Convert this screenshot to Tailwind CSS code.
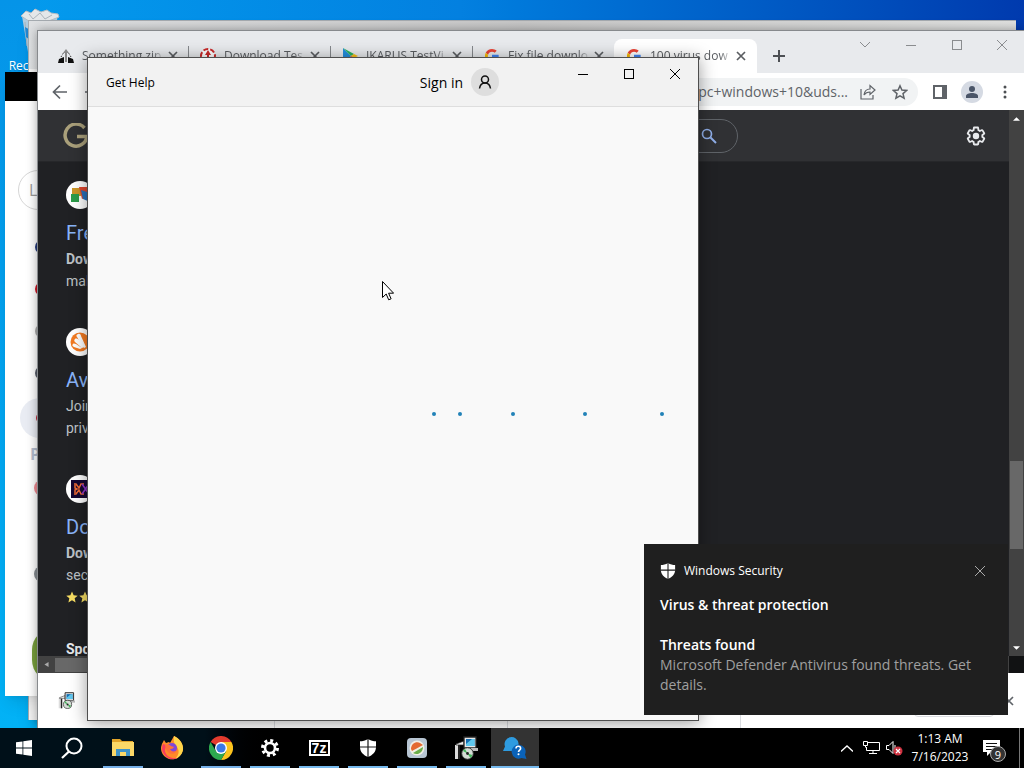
<!DOCTYPE html>
<html lang="en">
<head>
<meta charset="utf-8">
<title>Desktop</title>
<script src="https://cdn.jsdelivr.net/npm/@tailwindcss/browser@4"></script>
</head>
<body class="flex h-screen flex-col overflow-hidden bg-black font-['Open_Sans','Noto_Sans',sans-serif] text-xs">
<svg class="hidden" aria-hidden="true">
  <symbol id="x" viewBox="0 0 12 12"><path d="M1 1l10 10M11 1L1 11" fill="none" stroke="currentColor"/></symbol>
  <symbol id="tabx" viewBox="0 0 10 10"><path d="M1 1l8 8M9 1L1 9" fill="none" stroke="currentColor" stroke-width="1.7"/></symbol>
  <symbol id="g" viewBox="0 0 48 48">
    <path fill="#ea4335" d="M24 9.500c3.540 0 6.710 1.220 9.210 3.600l6.850-6.850C35.900 2.380 30.470 0 24 0 14.620 0 6.510 5.380 2.560 13.220l7.980 6.190C12.430 13.720 17.740 9.500 24 9.500z"/>
    <path fill="#4285f4" d="M46.980 24.550c0-1.570-.15-3.090-.38-4.550H24v9.020h12.940c-.58 2.960-2.260 5.480-4.780 7.180l7.730 6c4.510-4.180 7.090-10.360 7.090-17.650z"/>
    <path fill="#fbbc05" d="M10.530 28.590a14.500 14.500 0 010-9.180l-7.980-6.190a24 24 0 000 21.560z"/>
    <path fill="#34a853" d="M24 48c6.480 0 11.930-2.130 15.890-5.810l-7.730-6c-2.150 1.450-4.920 2.300-8.160 2.300-6.260 0-11.570-4.220-13.470-9.910l-7.980 6.190C6.510 42.620 14.620 48 24 48z"/>
  </symbol>
  <symbol id="shield" viewBox="0 0 18 18"><path fill="currentColor" d="M9 0c2.500 1.600 5.500 2.300 8 2.300V8c0 5-3.500 8.200-8 10-4.500-1.800-8-5-8-10V2.300C3.500 2.300 6.500 1.600 9 0z"/><path d="M9 0v18M1 8h16" stroke="#1c1c1c" stroke-width="1.200"/></symbol>
  <symbol id="gear" viewBox="0 0 24 24"><path fill="currentColor" d="M13.850 22.250h-3.700c-.74 0-1.360-.54-1.450-1.270l-.27-1.890c-.27-.14-.53-.29-.79-.46l-1.800.72c-.7.26-1.470-.03-1.810-.65L2.200 15.530c-.35-.66-.2-1.440.36-1.880l1.530-1.190a6 6 0 010-.91L2.570 10.360c-.59-.45-.74-1.260-.37-1.880l1.850-3.190c.34-.62 1.110-.9 1.790-.63l1.810.73c.26-.17.52-.32.78-.46l.27-1.910c.09-.7.710-1.250 1.440-1.250h3.700c.74 0 1.360.54 1.450 1.270l.27 1.890c.27.14.53.29.79.46l1.800-.72c.71-.26 1.480.03 1.820.65l1.840 3.180c.36.66.2 1.440-.36 1.880l-1.520 1.190a6 6 0 010 .91l1.520 1.190c.56.45.72 1.230.37 1.860l-1.860 3.220c-.34.62-1.110.9-1.800.63l-1.800-.72c-.26.17-.52.32-.78.46l-.27 1.910c-.1.680-.72 1.220-1.460 1.220zm-3.230-2h2.760l.37-2.550.53-.22c.44-.18.88-.44 1.340-.78l.45-.34 2.380.96 1.380-2.400-2.030-1.580.07-.56c.11-.9.110-.78 0-1.570l-.07-.56 2.030-1.580-1.390-2.400-2.390.96-.45-.35c-.42-.32-.87-.58-1.330-.77l-.52-.22-.37-2.550h-2.760l-.37 2.550-.53.21c-.44.19-.88.44-1.340.79l-.45.33-2.380-.95-1.390 2.390 2.030 1.580-.07.56a7 7 0 000 1.580l.07.56-2.030 1.580 1.380 2.400 2.390-.96.45.35c.43.33.86.58 1.330.77l.53.22zM12 8.500a3.500 3.500 0 100 7 3.500 3.500 0 000-7z"/></symbol>
  <symbol id="star" viewBox="0 0 24 24"><path fill="currentColor" d="M12 1l3.300 7.600 8.200.7-6.200 5.400 1.900 8.100L12 18.500l-7.200 4.300 1.900-8.100L.5 9.300l8.200-.7z"/></symbol>
  <symbol id="disc" viewBox="0 0 24 24"><path d="M1 9h5v14H1z" fill="#ddd"/><path d="M5 9v14" stroke="#222" stroke-width="2"/><path d="M2 8l8-3v4H2z" fill="#eee" stroke="#222" stroke-width=".7"/><path d="M10 1h12v11H10z" fill="#e8e8e8" stroke="#222" stroke-width="1.300"/><path d="M12 3h8.500v7H12z" fill="#126db2"/><path d="M12 8l6-5h2.500v7H12z" fill="#5fc8ee"/><path d="M11 12h13v3H11z" fill="#bbb"/><circle cx="13.500" cy="17.500" r="5.800" fill="#d4ddd5" stroke="#333"/><path d="M13.500 17.500L9 15a5 5 0 012-2zM13.500 17.500l4.800 1.500a5 5 0 01-2 3z" fill="#45b45b"/><circle cx="13.500" cy="17.500" r="1.400" fill="#222"/></symbol>
</svg>

<main class="relative min-h-0 flex-1 overflow-hidden bg-linear-to-r from-[#049cee] via-[#0380e0] via-45% to-[#003aae]">
  <div class="absolute inset-y-0 left-0 w-10 bg-linear-to-b from-[#0594e8] to-[#02b2f6]"></div>

  <!-- Recycle Bin shortcut -->
  <a href="#bin" class="absolute top-2 left-0 flex w-20 flex-col items-center gap-0.5 text-white">
    <svg class="h-12 w-10" viewBox="0 0 40 48"><path d="M2 8l36-2-6 38-12 4-12-4z" fill="#c3d2de" opacity=".9"/><path d="M1 8l5-5 5 2 4-4 6 3 6-2 4 3 7 1 1 3-13 5-14 1z" fill="#e4e7e9" stroke="#b4bdc5"/><path d="M9 6l4 5 7-6 5 6 7-4M5 14l2 24M10 15l2 26" fill="none" stroke="#aab4bc"/><path d="M5 19l7 4-2 9-4-3z" fill="#2389d4"/></svg>
    <span class="leading-4 text-shadow-sm">Recycle Bin</span>
  </a>

  <!-- Window behind everything -->
  <section class="absolute top-5 right-2 bottom-2 left-7 border-t border-l border-[#a5abb0] bg-linear-to-r from-[#dfe1e3] via-[#c8c8c8] via-50% to-[#e0e1e0] shadow-lg"><div class="absolute inset-x-0 top-12 bottom-0 bg-[#f4f4f4]"></div></section>

  <!-- Window with the account rail -->
  <section class="absolute top-[72px] bottom-8 left-[5px] w-[600px] overflow-hidden bg-white shadow-lg">
    <div class="h-[29px] bg-black"></div>
    <div class="ml-[13px] flex w-12 flex-col items-center pt-[69px]">
      <div class="flex size-10 items-center self-start rounded-full border border-[#d6d6d6] pl-2.5 text-base leading-5 text-[#9a9a9a]">L</div>
      <div class="mt-[30px] size-3.5 rounded-full bg-[#23397a]"></div>
      <div class="mt-7 size-3.5 rounded-full bg-[#cc1122]"></div>
      <div class="mt-7 size-3.5 rounded-full border-2 border-[#aaa]"></div>
      <div class="mt-7 size-3.5 rounded-full bg-[#555a66]"></div>
      <div class="mt-[18px] ml-0.5 flex size-10 items-center justify-center self-start rounded-full bg-[#e9ecf3]"><span class="ml-1 size-3 rounded-full bg-[#c02035]"></span></div>
      <div class="mt-1 w-6 text-base leading-6 font-bold text-[#b3bccd]">P</div>
      <div class="mt-[14px] size-4 rounded-full bg-[#ef8b92]"></div>
      <div class="mt-[70px] size-4 rounded-full bg-[#858b90]"></div>
    </div>
    <div class="mt-[46px] ml-[27px] h-[54px] w-11 rounded-full bg-[#789f3d]"></div>
  </section>

  <!-- Browser -->
  <section class="absolute top-[30px] right-0 bottom-0 left-[37px] flex flex-col border-t border-l border-[#878a8d] bg-white shadow-[0_0_10px_rgba(0,0,0,0.35)]">
    <header class="flex h-[42px] shrink-0 bg-[#e8eaed] text-[#5a5d61]">
      <nav class="flex pt-2 pl-2">
        <div class="flex w-[142px] items-center pr-2.5 pl-3">
          <svg class="size-4 shrink-0" viewBox="0 0 16 16"><path d="M0 15l1-4 5-2v6zM10 9l5 2 1 4h-6z" fill="#111"/><path d="M8 1l3 4H9v9H7V5H5z" fill="#888"/><path d="M3 9l3-5M13 9l-3-5" stroke="#333" stroke-dasharray="1.500"/></svg>
          <a href="#t1" class="ml-2 min-w-0 flex-1 mask-r-from-85% leading-4 whitespace-nowrap">Something zip</a>
          <button aria-label="Close tab" class="ml-1"><svg class="size-2.5"><use href="#tabx"/></svg></button>
        </div>
        <div class="flex w-[142px] items-center pr-2.5"><i class="h-5 w-px bg-[#85888c]"></i>
          <svg class="ml-[11px] size-4 shrink-0" viewBox="0 0 16 16"><circle cx="8" cy="8" r="7" fill="#fff" stroke="#c92a2a" stroke-width="2" stroke-dasharray="5 2"/><path d="M8 2l3 5H9v6H7V7H5z" fill="#c92a2a"/></svg>
          <a href="#t2" class="ml-2 min-w-0 flex-1 mask-r-from-85% leading-4 whitespace-nowrap">Download Tes</a>
          <button aria-label="Close tab" class="ml-1"><svg class="size-2.5"><use href="#tabx"/></svg></button>
        </div>
        <div class="flex w-[142px] items-center pr-2.5"><i class="h-5 w-px bg-[#85888c]"></i>
          <svg class="ml-[11px] size-4 shrink-0" viewBox="0 0 16 16"><path d="M1 0v16l8-8z" fill="#2490df"/><path d="M1 0l11 6-3 2z" fill="#28b463"/><path d="M12 6l4 2-4 2-3-2z" fill="#fbc116"/><path d="M1 16l11-6-3-2z" fill="#e94335"/></svg>
          <a href="#t3" class="ml-2 min-w-0 flex-1 mask-r-from-85% leading-4 whitespace-nowrap">IKARUS TestVi</a>
          <button aria-label="Close tab" class="ml-1"><svg class="size-2.5"><use href="#tabx"/></svg></button>
        </div>
        <div class="flex w-[142px] items-center pr-2.5"><i class="h-5 w-px bg-[#85888c]"></i>
          <svg class="ml-[11px] size-4 shrink-0 p-px"><use href="#g"/></svg>
          <a href="#t4" class="ml-2 min-w-0 flex-1 mask-r-from-85% leading-4 whitespace-nowrap">Fix file downlo</a>
          <button aria-label="Close tab" class="ml-1"><svg class="size-2.5"><use href="#tabx"/></svg></button>
        </div>
        <div class="flex w-[143px] items-center rounded-t-lg bg-white pr-[11px] pl-3">
          <svg class="size-4 shrink-0 p-px"><use href="#g"/></svg>
          <a href="#t5" class="ml-2 min-w-0 flex-1 mask-r-from-85% leading-4 whitespace-nowrap">100 virus dow</a>
          <button aria-label="Close tab" class="ml-1"><svg class="size-2.5"><use href="#tabx"/></svg></button>
        </div>
        <button aria-label="New tab" class="ml-4"><svg class="size-3" viewBox="0 0 12 12"><path d="M6 0v12M0 6h12" stroke="#4d5054" stroke-width="2"/></svg></button>
      </nav>
      <div class="ml-auto flex h-7 text-[#8a8c8f]">
        <button aria-label="Search tabs" class="flex w-[46px] items-center justify-center"><svg class="h-1.5 w-2.5" viewBox="0 0 10 6"><path d="M0 0l5 5 5-5" fill="none" stroke="currentColor"/></svg></button>
        <button aria-label="Minimize" class="flex w-[46px] items-center justify-center"><i class="h-px w-2.5 bg-[#8a8c8f]"></i></button>
        <button aria-label="Maximize" class="flex w-[46px] items-center justify-center"><i class="size-2.5 border border-[#8a8c8f]"></i></button>
        <button aria-label="Close" class="flex w-11 items-center justify-center"><svg class="size-3"><use href="#x"/></svg></button>
      </div>
    </header>

    <div class="flex h-[37px] shrink-0 items-center bg-white pr-[17px] pl-3.5 text-[#5f6368]">
      <button aria-label="Back"><svg class="size-4" viewBox="0 0 16 16"><path d="M15 8H2M8 1.500L1.500 8 8 14.500" fill="none" stroke="currentColor" stroke-width="1.700"/></svg></button>
      <button aria-label="Forward" class="ml-[17px]"><svg class="size-4" viewBox="0 0 16 16"><path d="M0 8h14M8 1.500L14.500 8 8 14.500" fill="none" stroke="currentColor" stroke-width="1.700"/></svg></button>
      <div class="ml-12 flex h-7 min-w-0 flex-1 items-center rounded-full bg-[#f1f3f4] pr-2.5">
        <input aria-label="Address" class="min-w-0 flex-1 text-right text-sm outline-none" value="google.com/search?q=download+for+pc+windows+10&amp;uds...">
        <button aria-label="Share" class="ml-3"><svg class="size-4" viewBox="0 0 16 16"><path d="M1 5v10h12v-4M4 11c.5-4 2.500-6 6-6V1.500L15 6l-5 4.500V8c-3 0-4.500.8-6 3z" fill="none" stroke="currentColor" stroke-width="1.200"/></svg></button>
        <button aria-label="Bookmark" class="ml-4"><svg class="size-4" viewBox="0 0 16 16"><path d="M8 1.800l1.900 4.300 4.700.4-3.600 3.100 1.100 4.600L8 11.800l-4.100 2.400L5 9.600 1.400 6.500l4.700-.4z" fill="none" stroke="currentColor" stroke-width="1.500"/></svg></button>
      </div>
      <button aria-label="Side panel" class="ml-[15px]"><svg class="size-3.5" viewBox="0 0 14 14"><path d="M0 0h14v14H0zM2 2v10h7V2z" fill="currentColor" fill-rule="evenodd"/></svg></button>
      <button aria-label="Profile" class="ml-3.5 flex size-[22px] items-center justify-center rounded-full bg-[#d5dae3] text-[#4a5568]"><svg class="size-3.5" viewBox="0 0 14 14"><circle cx="7" cy="4" r="3" fill="currentColor"/><path d="M1 13v-2c0-2 3-3 6-3s6 1 6 3v2z" fill="currentColor"/></svg></button>
      <button aria-label="Menu" class="ml-5"><svg class="h-4 w-1" viewBox="0 0 4 16"><g fill="#4c4f53"><circle cx="2" cy="3" r="1.500"/><circle cx="2" cy="8" r="1.500"/><circle cx="2" cy="13" r="1.500"/></g></svg></button>
    </div>

    <div class="flex min-h-0 flex-1 bg-[#111213]">
      <div class="flex min-w-0 flex-1 flex-col bg-[#202124] font-[Roboto,sans-serif] text-[#bdc1c6]">
        <div class="flex h-[52px] shrink-0 items-center border-b border-[#26272a] bg-[#303134] pr-[22px] pl-[25px]">
          <svg class="size-[26px]" viewBox="0 0 26 26"><path d="M21.500 5A11 11 0 1 0 24 13.500H14" fill="none" stroke="#aaa07b" stroke-width="3.500"/></svg>
          <form class="ml-10 flex h-[34px] w-[609px] items-center rounded-full border border-[#5f6368] pr-5">
            <input aria-label="Search" class="min-w-0 flex-1 outline-none">
            <button aria-label="Search"><svg class="size-4" viewBox="0 0 16 16"><circle cx="6" cy="6" r="4.500" fill="none" stroke="#8faee8" stroke-width="1.700"/><path d="M9.500 9.500L15 15" stroke="#8faee8" stroke-width="2"/></svg></button>
          </form>
          <button aria-label="Settings" class="ml-auto text-[#e8eaed]"><svg class="size-[22px]"><use href="#gear"/></svg></button>
        </div>
        <div class="min-h-0 flex-1 overflow-hidden pt-[19px] pl-7 text-sm leading-[22px]">
          <article class="h-[147px]">
            <svg class="size-7 rounded-full bg-white" viewBox="0 0 28 28"><path d="M6 7h9v8H6z" fill="#cc9628"/><path d="M5 13h8v8H5z" fill="#2c9c49"/><path d="M13 6h11v9l-8 3z" fill="#df472f"/><path d="M15 9l9 3v9l-7-3z" fill="#2873bd"/></svg>
            <h3 class="mt-2.5 mb-px text-xl leading-7 text-[#8ab4f8]"><a href="#r1">Free</a></h3>
            <p class="font-bold">Down</p><p>mal</p>
          </article>
          <article class="h-[147px]">
            <svg class="size-7 rounded-full bg-white" viewBox="0 0 28 28"><circle cx="14" cy="14" r="9.500" fill="#f37a21"/><path d="M12 6c2-1 3 1 3 2l5 11-2 1-7-11c-1-1-1-2 1-3zM9 11c1-1 3 0 4 1l5 7-2 1-7-6c-1-1-1-2 0-3zM7 16c1-1 2 0 3 0l6 4-2 1-6-2c-2-1-2-2-1-3z" fill="#fff"/></svg>
            <h3 class="mt-2.5 mb-px text-xl leading-7 text-[#8ab4f8]"><a href="#r2">Ava</a></h3>
            <p>Join</p><p>priv</p>
          </article>
          <article>
            <svg class="size-7 rounded-full bg-white" viewBox="0 0 28 28"><path d="M5 5h20v18H5z" fill="#160833"/><path d="M8 9h2l3 4 2-4h3M8 19h2l3-4 2 4h3M9 10v3l2 1-2 1v3" fill="none" stroke="#f06a35" stroke-width="1.500"/><path d="M16 9l7 10M23 9l-7 10" stroke="#9135c8" stroke-width="1.500"/></svg>
            <h3 class="mt-2.5 mb-px text-xl leading-7 text-[#8ab4f8]"><a href="#r3">Dow</a></h3>
            <p class="font-bold">Down</p><p>sec</p>
            <div class="flex h-[22px] items-center gap-px text-[#f5dc62]"><svg class="size-3"><use href="#star"/></svg><svg class="size-3"><use href="#star"/></svg></div>
          </article>
          <p class="mt-[30px] font-bold text-[#e8eaed]">Spon</p>
        </div>
        <div class="flex h-[17px] shrink-0 items-center bg-[#424242]">
          <svg class="mx-1.5 size-[5px]" viewBox="0 0 5 6"><path d="M5 0v6L0 3z" fill="#aaa"/></svg>
          <i class="h-3.5 w-[700px] bg-[#686868]"></i>
        </div>
      </div>
      <div class="mb-[17px] flex w-[15px] flex-col items-center bg-[#424242] pt-[7px] pb-1.5">
        <svg class="h-1 w-[7px]" viewBox="0 0 8 4"><path d="M0 4h8L4 0z" fill="#fff"/></svg>
        <i class="mt-[340px] h-[88px] w-[13px] bg-[#686868]"></i>
        <svg class="mt-auto h-1 w-[7px]" viewBox="0 0 8 4"><path d="M0 0h8L4 4z" fill="#fff"/></svg>
      </div>
    </div>

    <footer class="flex h-[55px] shrink-0 items-center bg-white pr-2.5 pl-5">
      <svg class="size-[17px] shrink-0"><use href="#disc"/></svg>
      <i class="ml-[199px] h-8 w-px self-end bg-[#dadce0]"></i>
      <i class="ml-[232px] h-8 w-px self-end bg-[#dadce0]"></i>
      <i class="ml-[232px] h-8 w-px self-end bg-[#dadce0]"></i>
      <button aria-label="Show all downloads" class="ml-auto h-8 w-20 rounded border border-[#dadce0]"></button>
      <button aria-label="Close downloads" class="ml-2.5 text-[#5f6368]"><svg class="size-2.5"><use href="#tabx"/></svg></button>
    </footer>
  </section>

  <!-- Get Help -->
  <section class="absolute top-[57px] left-[87px] flex h-[664px] w-[612px] flex-col border border-[#4e4e4e] bg-[#f9f9f9] text-black shadow-[0_2px_16px_rgba(0,0,0,0.4)]">
    <header class="flex h-[49px] shrink-0 items-center border-b border-[#dedede] bg-[#f2f2f2] pl-[18px]">
      <h1 class="pt-0.5 leading-4">Get Help</h1>
      <button class="ml-auto flex items-center gap-2 text-sm"><span class="pt-0.5">Sign in</span>
        <span class="flex size-7 items-center justify-center rounded-full bg-[#dedede]"><svg class="size-3.5" viewBox="0 0 14 14"><circle cx="7" cy="4.500" r="3.500" fill="none" stroke="#111" stroke-width="1.500"/><path d="M1.500 13.500C2 10 4 8 7 8s5 2 5.500 5.500" fill="none" stroke="#111" stroke-width="1.500"/></svg></span>
      </button>
      <div class="ml-[61px] flex h-8 self-start">
        <button aria-label="Minimize" class="flex w-[46px] items-center justify-center"><i class="h-px w-2.5 bg-black"></i></button>
        <button aria-label="Maximize" class="flex w-[46px] items-center justify-center"><i class="size-2.5 border border-black"></i></button>
        <button aria-label="Close" class="flex w-[46px] items-center justify-center"><svg class="size-3"><use href="#x"/></svg></button>
      </div>
    </header>
    <div role="progressbar" aria-label="Loading" class="pt-[305px]">
      <svg class="h-1 w-full" viewBox="0 0 610 4"><g fill="#2282b8"><circle cx="346" cy="2" r="2"/><circle cx="372" cy="2" r="2"/><circle cx="425" cy="2" r="2"/><circle cx="497" cy="2" r="2"/><circle cx="574" cy="2" r="2"/></g></svg>
    </div>
  </section>

  <!-- Pointer -->
  <svg class="absolute top-[281px] left-[382px] h-5 w-3" viewBox="0 0 12 20"><path d="M.5.500v16l3.700-3.500 2.500 5.800 2.400-1-2.500-5.600h5z" fill="#fff" stroke="#000"/></svg>

  <!-- Notification -->
  <aside class="absolute right-4 bottom-[13px] w-[364px] bg-[#1f1f1f] px-4 pt-[18px] pb-5 text-sm leading-5 text-white">
    <div class="flex h-[18px] items-center text-xs">
      <svg class="size-4"><use href="#shield"/></svg><span class="ml-2">Windows Security</span>
      <button aria-label="Dismiss" class="mr-1.5 ml-auto text-[#aaa]"><svg class="size-3"><use href="#x"/></svg></button>
    </div>
    <h2 class="mt-[15px] font-semibold">Virus &amp; threat protection</h2>
    <h3 class="mt-5 font-semibold">Threats found</h3>
    <p class="text-[#a0a0a0]">Microsoft Defender Antivirus found threats. Get details.</p>
  </aside>
</main>

<!-- Taskbar -->
<footer class="flex h-10 shrink-0 items-stretch bg-linear-to-r from-[#001019] from-20% to-black to-27% text-white">
  <button aria-label="Start" class="flex w-12 items-center justify-center"><svg class="size-4" viewBox="0 0 16 16"><path d="M0 2.300l6.500-.9v6.200H0zM7.300 1.300L16 0v7.600H7.300zM0 8.400h6.500v6.200L0 13.700zM7.300 8.400H16V16l-8.700-1.200z" fill="#fff"/></svg></button>
  <button aria-label="Search" class="flex w-12 items-center justify-center"><svg class="size-[22px]" viewBox="0 0 22 22"><circle cx="13" cy="9" r="7.500" fill="none" stroke="#fff" stroke-width="2"/><path d="M8 14.500L1 21" stroke="#fff" stroke-width="2.200"/></svg></button>
  <nav class="ml-[3px] flex gap-px">
    <button aria-label="File Explorer" class="flex w-12 flex-col items-center justify-between pt-2"><svg class="h-6 w-[22px]" viewBox="0 0 22 24"><path d="M0 3h8l2 2h11v4H0z" fill="#e2a429"/><path d="M0 8V6h22v14H0z" fill="#fbd867"/><path d="M4 20v-7h14v7h-4v-4H8v4z" fill="#3f93c7"/></svg><i class="h-0.5 w-10 bg-[#76b0e8]"></i></button>
    <button aria-label="Firefox" class="flex w-12 items-start justify-center pt-2"><svg class="size-6" viewBox="0 0 24 24"><path d="M23 13A11 11 0 1 1 3 6l1-2 2 3 3-1 1 1 4-7c5 2 9 7 9 13z" fill="#ff8a2a"/><path d="M14 0c5 2 10 8 9 14-1 5-5 8-8 9 5-5 4-9 2-12-2-2-4-5-3-11z" fill="#ffd54a"/><path d="M3 8a11 11 0 0015 14c-6 1-12-1-13-7 0-3 1-5 4-5z" fill="#fb3b5e"/><circle cx="12" cy="12" r="5" fill="#8046d8"/><path d="M5 9c3-1 5 0 6 1l3 1c-1 2-3 2-4 2 1 3 5 3 7 1-2 6-11 5-12-5z" fill="#ff7139"/></svg></button>
    <button aria-label="Chrome" class="flex w-12 flex-col items-center justify-between pt-2"><svg class="size-6" viewBox="0 0 24 24"><path d="M12 12L1.600 6A12 12 0 0122.400 6z" fill="#e33b2e"/><path d="M12 12V6h10.400A12 12 0 0112 24l5.200-9z" fill="#fcc31e"/><path d="M1.600 6L6.800 15l10.400 0L12 24A12 12 0 011.600 6z" fill="#2da94f"/><circle cx="12" cy="12" r="6" fill="#fff"/><circle cx="12" cy="12" r="4.600" fill="#3c79e6"/></svg><i class="h-0.5 w-10 bg-[#76b0e8]"></i></button>
    <button aria-label="Settings" class="flex w-12 flex-col items-center justify-between pt-[11px]"><svg class="size-[18px]" viewBox="0 0 18 18"><circle cx="9" cy="9" r="5" fill="none" stroke="#fff" stroke-width="2.600"/><circle cx="9" cy="9" r="7.500" fill="none" stroke="#fff" stroke-width="3" stroke-dasharray="2.950 2.940"/></svg><i class="h-0.5 w-10 bg-[#76b9ed]"></i></button>
    <button aria-label="7-Zip" class="flex w-12 flex-col items-center justify-between pt-3"><span class="flex h-4 w-[21px] items-center justify-center border-2 border-white bg-black font-['Liberation_Sans',sans-serif] text-sm leading-none font-bold">7z</span><i class="h-0.5 w-10 bg-[#76b9ed]"></i></button>
    <button aria-label="Security" class="flex w-12 flex-col items-center justify-between pt-[11px]"><svg class="size-[18px]"><use href="#shield"/></svg><i class="h-0.5 w-10 bg-[#76b9ed]"></i></button>
    <button aria-label="Media app" class="flex w-12 flex-col items-center justify-between pt-2.5"><svg class="size-5" viewBox="0 0 20 20"><rect width="20" height="20" rx="4" fill="#b7c5d3"/><circle cx="10" cy="10" r="7.500" fill="#f1eee5"/><path d="M4 11c0-5 5-8 9-6l3 2-11 6z" fill="#e46a32"/><path d="M6 15l10-6c0 5-5 9-10 6z" fill="#6aac48"/></svg><i class="h-0.5 w-10 bg-[#76b9ed]"></i></button>
    <button aria-label="Installer" class="flex w-12 flex-col items-center justify-between pt-2"><svg class="size-6"><use href="#disc"/></svg><i class="h-0.5 w-10 bg-[#76b9ed]"></i></button>
    <button aria-label="Get Help" class="flex w-12 flex-col items-center justify-between bg-[#333] pt-2"><svg class="size-6" viewBox="0 0 24 24"><path d="M0 15l2-4.500A7 7 0 118 15z" fill="#2e9be0"/><path d="M23.500 23l-5-1a7 7 0 113.500-3.500z" fill="#0a62b8"/><path d="M13 12.500c0-3 4.600-3 4.600 0 0 1.700-2.100 1.700-2.100 3.500" fill="none" stroke="#fff" stroke-width="1.600"/><circle cx="15.500" cy="18.300" r="1" fill="#fff"/></svg><i class="h-0.5 w-12 bg-[#76b9ed]"></i></button>
  </nav>
  <div class="ml-auto flex items-center">
    <button aria-label="Show hidden icons"><svg class="h-[7px] w-3" viewBox="0 0 12 7"><path d="M0 6.500l6-5.500 6 5.500" fill="none" stroke="#fff" stroke-width="1.300"/></svg></button>
    <button aria-label="Network" class="ml-2.5"><svg class="h-4 w-[17px]" viewBox="0 0 17 16"><path d="M5 2.500h11.500v8H3.500V7M.5 1.500h4v4h-4zM10 10.500v3M6 13.500h8M2.500 5.500v2" fill="none" stroke="#fff"/></svg></button>
    <button aria-label="Volume" class="ml-1.5"><svg class="h-4 w-[17px]" viewBox="0 0 17 16"><path d="M.5 5.500H3l4-4v12l-4-4H.5zM9 5v4" fill="none" stroke="#fff"/><circle cx="12" cy="11" r="4.500" fill="#cf3341"/><path d="M10 9l4 4M14 9l-4 4" stroke="#fff" stroke-width="1.200"/></svg></button>
    <time class="ml-2 w-[58px] text-center leading-[18px] whitespace-nowrap">1:13 AM<br>7/16/2023</time>
    <button aria-label="9 notifications" class="relative ml-3.5"><svg class="h-4 w-[17px]" viewBox="0 0 17 16"><path d="M0 0h17v12H8l-4 4v-4H0z" fill="#fff"/><path d="M3 3.500h11M3 6.500h11M3 9.500h8" stroke="#111"/></svg><span class="absolute top-1.5 left-[7px] flex size-4 items-center justify-center rounded-full border border-[#aaa] bg-[#333] text-[11px] leading-none">9</span></button>
    <i class="mr-1 ml-[19px] h-10 w-px bg-[#777]"></i>
  </div>
</footer>
</body>
</html>
